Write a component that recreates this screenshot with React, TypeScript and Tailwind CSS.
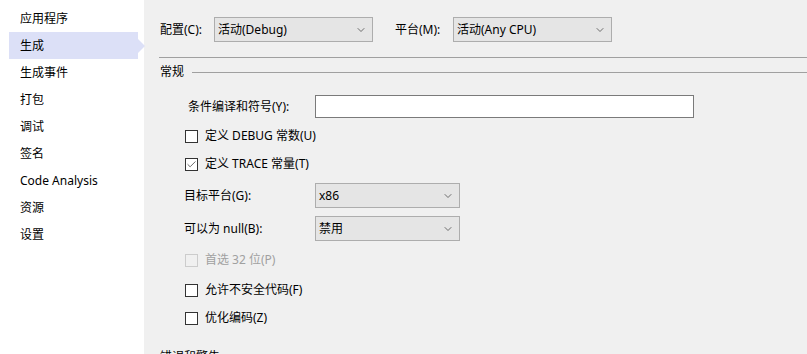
import { ChevronDown, Check } from 'lucide-react';

const navItems = ['应用程序', '生成', '生成事件', '打包', '调试', '签名', 'Code Analysis', '资源', '设置'];

function Select({ value, width }: { value: string; width: string }) {
  return (
    <div
      className={`${width} h-[25px] flex items-center justify-between bg-[#e5e5e5] border border-[#adadad] pl-[3px] pr-[5px] text-[#000]`}
    >
      <span>{value}</span>
      <ChevronDown size={12} strokeWidth={1.5} className="text-[#444]" />
    </div>
  );
}

function CheckRow({ label, checked = false, disabled = false }: { label: string; checked?: boolean; disabled?: boolean }) {
  return (
    <div className={`h-[28px] flex items-center ${disabled ? 'text-[#a0a0a0]' : 'text-[#000]'}`}>
      <div
        className={`w-[13px] h-[13px] border flex items-center justify-center ${
          disabled ? 'border-[#cccccc] bg-[#f0f0f0]' : 'border-[#333333] bg-white'
        }`}
      >
        {checked && <Check size={11} strokeWidth={1.6} className="text-[#333]" />}
      </div>
      <span className="ml-[7px]">{label}</span>
    </div>
  );
}

function SectionHeader({ title }: { title: string }) {
  return (
    <div className="flex items-center h-[20px]">
      <span className="pl-[1px]">{title}</span>
      <div className="flex-1 ml-[8px] border-t border-[#a0a0a0]" />
    </div>
  );
}

export default function App() {
  return (
    <div
      className="w-[807px] h-[354px] flex overflow-hidden text-[12px] text-black"
      style={{ fontFamily: '"Noto Sans", "Noto Sans CJK SC", sans-serif' }}
    >
      {/* left nav */}
      <div className="w-[144px] shrink-0 bg-white pt-[5px] relative z-10">
        {navItems.map((item) =>
          item === '生成' ? (
            <div key={item} className="relative ml-[9px] w-[129px] h-[27px] flex items-center pl-[11px] bg-[#dce0f7]">
              {item}
              <div className="absolute left-full top-1/2 -translate-y-1/2 w-0 h-0 border-y-[7px] border-y-transparent border-l-[7px] border-l-[#dce0f7]" />
            </div>
          ) : (
            <div key={item} className="h-[27px] flex items-center pl-[20px]">
              {item}
            </div>
          )
        )}
      </div>

      {/* settings page */}
      <div className="flex-1 bg-[#f0f0f0] pl-[15px]">
        <div className="flex items-center pt-[17px]">
          <span className="w-[55px] pl-[1px]">配置(C):</span>
          <Select value="活动(Debug)" width="w-[159px]" />
          <span className="ml-[22px] w-[58px]">平台(M):</span>
          <Select value="活动(Any CPU)" width="w-[159px]" />
        </div>
        <div className="mt-[15px] border-t border-[#a0a0a0]" />

        <div className="mt-[4px]">
          <SectionHeader title="常规" />
        </div>

        <div className="flex items-center mt-[13px]">
          <span className="ml-[29px] w-[127px]">条件编译和符号(Y):</span>
          <div className="w-[379px] h-[23px] bg-white border border-[#7a7a7a]" />
        </div>

        <div className="ml-[26px] mt-[4px]">
          <CheckRow label="定义 DEBUG 常数(U)" />
          <CheckRow label="定义 TRACE 常量(T)" checked />
        </div>

        <div className="flex items-center mt-[5px] ml-[25px]">
          <span className="w-[131px]">目标平台(G):</span>
          <Select value="x86" width="w-[145px]" />
        </div>
        <div className="flex items-center mt-[8px] ml-[25px]">
          <span className="w-[131px]">可以为 null(B):</span>
          <Select value="禁用" width="w-[145px]" />
        </div>

        <div className="ml-[26px] mt-[5px]">
          <CheckRow label="首选 32 位(P)" disabled />
          <div className="h-[2px]" />
          <CheckRow label="允许不安全代码(F)" />
          <CheckRow label="优化编码(Z)" />
        </div>

        <div className="mt-[15px]">
          <SectionHeader title="错误和警告" />
        </div>
      </div>
    </div>
  );
}
